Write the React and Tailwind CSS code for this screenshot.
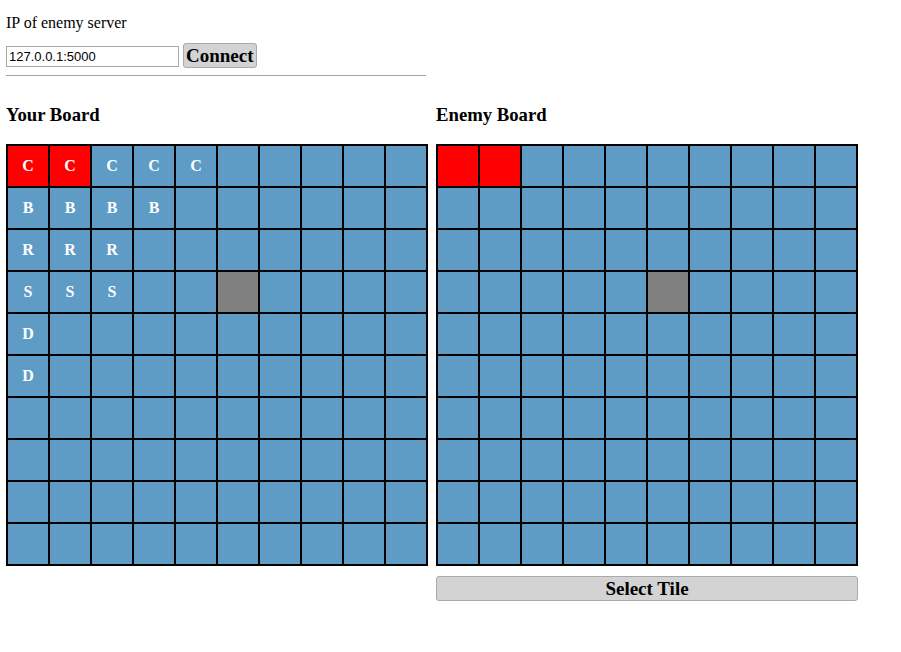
import React from 'react';

const serif = { fontFamily: '"Liberation Serif", "Times New Roman", serif' };

const yourRows = [
  ['C', 'C', 'C', 'C', 'C'],
  ['B', 'B', 'B', 'B'],
  ['R', 'R', 'R'],
  ['S', 'S', 'S'],
  ['D'],
  ['D'],
];

function Board({ red, gray, letters }) {
  const cells = [];
  for (let r = 0; r < 10; r++) {
    for (let c = 0; c < 10; c++) {
      const key = r + '-' + c;
      let bg = 'bg-[#5e9cc6]';
      if (red.includes(key)) bg = 'bg-[#ff0000]';
      if (gray.includes(key)) bg = 'bg-[#808080]';
      const letter = letters && letters[r] ? letters[r][c] : null;
      cells.push(
        <div
          key={key}
          className={`${bg} w-[40px] h-[40px] flex items-center justify-center text-white font-bold text-[16px]`}
        >
          {letter}
        </div>
      );
    }
  }
  return (
    <div className="grid grid-cols-[repeat(10,40px)] gap-[2px] p-[2px] bg-black w-[422px]">
      {cells}
    </div>
  );
}

export default function App() {
  return (
    <div className="bg-white min-h-[652px] px-[6px] pt-[14px] text-black" style={serif}>
      <p className="text-[16px] leading-[18px] h-[18px]">IP of enemy server</p>
      <div className="flex items-end gap-[4px] mt-[11px] w-[420px]">
        <input
          type="text"
          defaultValue="127.0.0.1:5000"
          className="w-[173px] h-[21px] border border-[#a9a9a9] px-[2px] text-[13px] outline-none mb-[1px]"
          style={{ fontFamily: '"Liberation Sans", Arial, sans-serif' }}
        />
        <button className="h-[25px] px-[2px] bg-[#d3d3d3] border border-[#a9a9a9] rounded-[3px] font-bold text-[19px] leading-[20px]">
          Connect
        </button>
      </div>
      <hr className="w-[420px] mt-[7px] border-t border-[#a0a0a0]" />
      <div className="flex gap-[8px] mt-[28px]">
        <div>
          <h2 className="font-bold text-[18.72px] leading-[22px] mb-[18px]">Your Board</h2>
          <Board red={['0-0', '0-1']} gray={['3-5']} letters={yourRows} />
        </div>
        <div>
          <h2 className="font-bold text-[18.72px] leading-[22px] mb-[18px]">Enemy Board</h2>
          <Board red={['0-0', '0-1']} gray={['3-5']} />
          <button className="mt-[10px] w-[422px] h-[25px] bg-[#d3d3d3] border border-[#a9a9a9] rounded-[3px] font-bold text-[19px] leading-[20px]">
            Select Tile
          </button>
        </div>
      </div>
    </div>
  );
}
